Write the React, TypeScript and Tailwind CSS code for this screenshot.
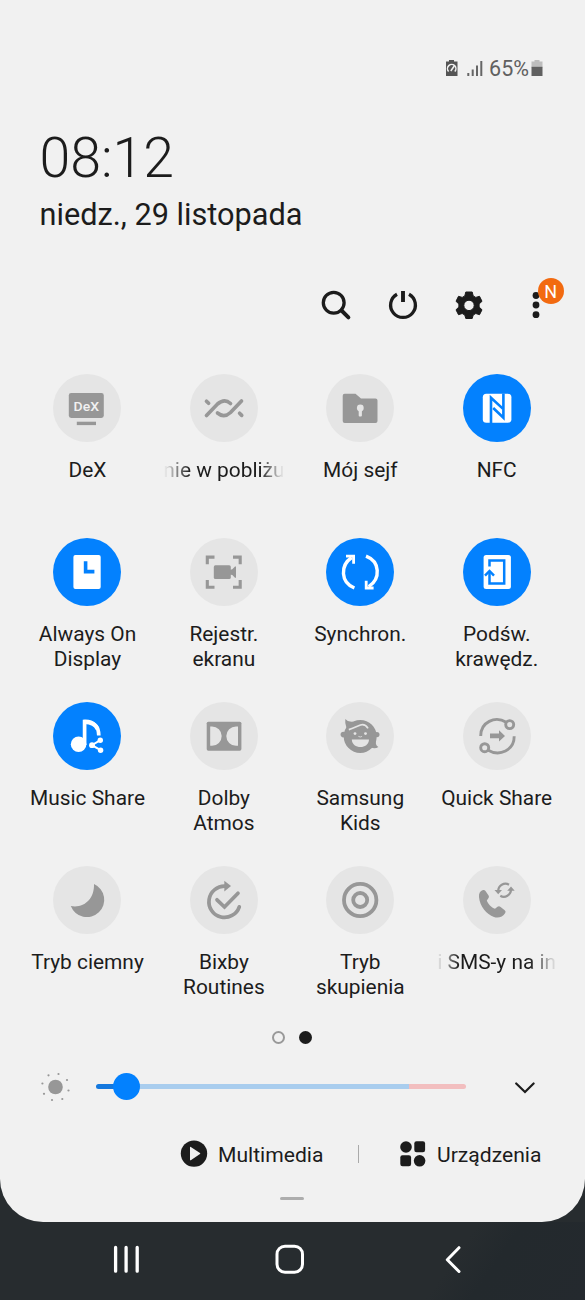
import type { ReactNode } from "react";

const G = "#979797";
const L = "#e5e5e5";
const B = "#0381fe";

type Tile = { label: string[]; on?: boolean; fade?: "left" | "right"; icon: ReactNode };

const tiles: Tile[] = [
  {
    label: ["DeX"],
    icon: (
      <>
        <rect x="15.8" y="19" width="35" height="25" rx="2.4" fill={G} />
        <rect x="23.8" y="47.7" width="19.2" height="3.4" fill={G} />
        <text x="33.3" y="36.7" fontSize="13.5" fontWeight="500" textAnchor="middle" textLength="25.5" lengthAdjust="spacingAndGlyphs" fill="#f1f1f1" fontFamily="Roboto">DeX</text>
      </>
    ),
  },
  {
    label: ["nie w pobliżu"],
    fade: "left",
    icon: (
      <g stroke={G} strokeWidth="3.7" strokeLinecap="round">
        <path d="M16.5 41.5 L27.5 30 Q34.5 24 40.5 29.5" />
        <path d="M51.5 27 L40.5 38.5 Q34 44.5 27.5 39" />
        <path d="M16.5 27.2 L18.6 29.3 M49.6 39.3 L51.7 41.4" />
      </g>
    ),
  },
  {
    label: ["Mój sejf"],
    icon: (
      <>
        <path d="M18.7 19.7 H29.5 L35 24.6 H49.5 A2 2 0 0 1 51.5 26.6 V47 A2 2 0 0 1 49.5 49 H18.7 A2 2 0 0 1 16.7 47 V21.7 A2 2 0 0 1 18.7 19.7Z" fill={G} />
        <circle cx="34.3" cy="34" r="3.4" fill={L} />
        <rect x="32.7" y="35" width="3.2" height="7.6" rx="1" fill={L} />
      </>
    ),
  },
  {
    label: ["NFC"],
    on: true,
    icon: (
      <>
        <rect x="19.8" y="19.8" width="28.6" height="29" rx="3.5" fill="white" />
        <path d="M28 49.2 V23.8 L39.8 34.6" stroke={B} strokeWidth="2.6" />
        <path d="M40.4 19.4 V43.8 L30.2 34" stroke={B} strokeWidth="2.6" />
      </>
    ),
  },
  {
    label: ["Always On", "Display"],
    on: true,
    icon: (
      <>
        <rect x="20.4" y="17" width="27.3" height="34" rx="2" fill="white" />
        <path d="M30.8 23.3 h3.6 v8.4 h7 v3.7 h-10.6z" fill={B} />
      </>
    ),
  },
  {
    label: ["Rejestr.", "ekranu"],
    icon: (
      <>
        <path d="M17.3 26.3 V19.1 H24.5 M43 19.1 H50.2 V26.3 M50.2 42 V49.2 H43 M24.5 49.2 H17.3 V42" stroke={G} strokeWidth="3.1" />
        <rect x="23.8" y="27.3" width="17" height="13.8" rx="1.6" fill={G} />
        <path d="M39.5 32 L42.3 31.2 L45 28.5 H46 V39.8 H45 L42.3 37.1 L39.5 36.4Z" fill={G} />
      </>
    ),
  },
  {
    label: ["Synchron."],
    on: true,
    icon: (
      <g stroke="white" strokeWidth="3.4">
        <path d="M28.4 50 C14.5 44.5 14 27.5 25.7 19.5" />
        <path d="M20 18.1 H27.6 V25.8" strokeWidth="2.8" />
        <path d="M40 18.2 C54 23.5 55 40.5 42.7 48.7" />
        <path d="M47.6 50 H40.2 V42.8" strokeWidth="2.8" />
      </g>
    ),
  },
  {
    label: ["Podśw.", "krawędz."],
    on: true,
    icon: (
      <>
        <rect x="20.6" y="17" width="27.3" height="34" rx="2.5" fill="white" />
        <g stroke={B} strokeWidth="2.5">
          <path d="M26.5 28.6 V22.6 H41.2 V45.5 H26.5 V34" />
          <path d="M22 37.6 L26.5 33 L31 37.6" />
        </g>
      </>
    ),
  },
  {
    label: ["Music Share"],
    on: true,
    icon: (
      <>
        <circle cx="25.6" cy="42.3" r="7.8" fill="white" />
        <path d="M31.6 43 V19.4 C40 19 45.8 24 45.8 33.4" stroke="white" strokeWidth="3.7" />
        <path d="M31.6 20 C38.5 20.5 43 22.5 44.6 27" stroke="white" strokeWidth="4.2" />
        <path d="M47.4 38.2 L38.9 43.2 L47.6 48.2" stroke="white" strokeWidth="2" />
        <circle cx="47.3" cy="38.2" r="2.7" fill="white" />
        <circle cx="39" cy="43.2" r="2.9" fill="white" />
        <circle cx="47.6" cy="48.2" r="2.7" fill="white" />
      </>
    ),
  },
  {
    label: ["Dolby", "Atmos"],
    icon: (
      <>
        <rect x="16.7" y="19.7" width="34.7" height="29" rx="1.6" fill={G} />
        <path d="M20.2 24.4 H22 A9.7 9.7 0 0 1 22 43.8 H20.2Z M48 24.4 H46 A9.7 9.7 0 0 0 46 43.8 H48Z" fill={L} />
      </>
    ),
  },
  {
    label: ["Samsung", "Kids"],
    icon: (
      <>
        <circle cx="34.2" cy="34.4" r="16.5" fill={G} />
        <circle cx="17.4" cy="32.6" r="2.8" fill={G} />
        <circle cx="50.9" cy="32.6" r="2.6" fill={G} />
        <path d="M19.3 17 Q21.5 20 26.5 19.6 L29 24 L20.5 26 Q18.7 21 19.3 17Z M50 38 Q49.2 43.5 52.4 45 Q49 47.2 45 45.5Z" fill={G} />
        <path d="M22.8 27.6 C27 26.5 30.5 24.5 34.5 23 Q39 21.6 42 26.4" stroke={L} strokeWidth="1.7" />
        <path d="M25.8 37.6 H43 C42.8 47.6 26 47.6 25.8 37.6Z" fill={L} />
        <circle cx="29" cy="31.6" r="1.4" fill={L} />
        <circle cx="39.5" cy="31.6" r="1.4" fill={L} />
        <path d="M32.4 34.4 Q34.3 35.6 36.1 34.4" stroke={L} strokeWidth="0.8" />
      </>
    ),
  },
  {
    label: ["Quick Share"],
    icon: (
      <>
        <g stroke={G} strokeWidth="2.9">
          <path d="M17.7 34 C17.7 20 32 13.5 43.3 20.2" />
          <circle cx="46.7" cy="22.6" r="4" />
          <path d="M51.2 34.3 C51.2 48.5 36.5 54.8 25.2 48.2" />
          <circle cx="21.7" cy="45.7" r="4" />
        </g>
        <path d="M27 31.6 H36 V28.2 L42 34 L36 39.6 V36.2 H27Z" fill={G} />
      </>
    ),
  },
  {
    label: ["Tryb ciemny"],
    icon: <path d="M41 18 A17.3 17.3 0 1 1 17.8 40 C31 42.5 41.5 33 41 18Z" fill={G} />,
  },
  {
    label: ["Bixby", "Routines"],
    icon: (
      <>
        <path d="M49.3 40.8 A15.6 15.6 0 1 1 35.5 20.2" stroke={G} strokeWidth="3.7" strokeLinecap="round" />
        <path d="M34.3 14.8 L41 20 L34.3 25.5Z" fill={G} />
        <path d="M27 33.8 L34.5 41 L48 27.2" stroke={G} strokeWidth="3.7" strokeLinecap="round" />
      </>
    ),
  },
  {
    label: ["Tryb", "skupienia"],
    icon: (
      <g stroke={G} strokeWidth="3.8">
        <circle cx="34.2" cy="34" r="16.2" />
        <circle cx="34.2" cy="34" r="7" />
      </g>
    ),
  },
  {
    label: ["i SMS-y na in"],
    fade: "right",
    icon: (
      <>
        <path d="M16 31 C15.7 27.8 17 25 20 24.1 Q21.6 23.7 22.5 25.1 L25.6 29.4 Q26.6 31 25.2 32.6 L23.8 34.5 C24.9 38 28.5 41.6 32 42.8 L34.5 40.8 Q36 39.8 37.6 41 L41.7 44.2 Q43.2 45.5 42.2 47 C40 51 35 52.4 31 51 C23.5 48.3 16.8 40.5 16 31Z" fill={G} />
        <g stroke={G} strokeWidth="2.2">
          <path d="M35.2 25.5 C35 19.4 41.3 16 46 18.7" />
          <path d="M48 23 C48.2 29.2 41.8 32.5 37.3 29.8" />
        </g>
        <path d="M31.5 24 H39 L35.2 28.2Z M44.2 24.8 H51.7 L48 20.6Z" fill={G} />
      </>
    ),
  },
];

function TileView({ tile }: { tile: Tile }) {
  const fade =
    tile.fade === "left"
      ? "[mask-image:linear-gradient(to_right,transparent,black_26px,black_96px,transparent)]"
      : tile.fade === "right"
        ? "[mask-image:linear-gradient(to_right,transparent,black_22px,black_92px,transparent)]"
        : "";
  return (
    <button className="flex h-[164.1px] flex-col items-center">
      <span className={`flex size-[68px] rounded-full ${tile.on ? "bg-[#0381fe]" : "bg-[#e5e5e5]"}`}>
        <svg width="68" height="68" viewBox="0 0 68 68" fill="none">{tile.icon}</svg>
      </span>
      <span className={`mt-[16.5px] flex w-[120px] flex-col items-center overflow-hidden text-[20.9px] leading-[25px] whitespace-nowrap ${fade}`}>
        {tile.label.map((line) => (
          <span key={line} className="block">{line}</span>
        ))}
      </span>
    </button>
  );
}

export default function App() {
  return (
    <div className="h-[1300px] w-[585px] overflow-hidden bg-[#272c2f] font-[Roboto,sans-serif] text-[#1c1c1c]">
      <main className="flex h-[1221.5px] flex-col rounded-b-[43px] bg-[#f1f1f1]">
        <div className="flex h-[96px] items-end justify-end pr-[41px] pb-[15px] text-[#606060]">
          <svg width="44" height="24" viewBox="0 0 44 24" fill="none">
            <path d="M5 4.5 H8 V3 H13 V4.5 H16.5 V19 H5Z" fill="#555" />
            <path d="M7.6 14.5 A4.2 4.2 0 1 1 13.8 14.5" stroke="#f1f1f1" strokeWidth="1.5" />
            <path d="M9.8 14 L13.2 9" stroke="#f1f1f1" strokeWidth="1.5" />
            <path d="M27.3 16V19 M31.7 12.5V19 M36 8.5V19 M40.3 4V19" stroke="#666" strokeWidth="2" />
          </svg>
          <span className="ml-[4px] text-[21.5px] leading-6">65%</span>
          <svg width="15" height="24" viewBox="0 0 15 24">
            <path d="M2.5 4.5 H5.5 V3 H10.5 V4.5 H13.5 V10.5 H2.5Z" fill="#bdbdbd" />
            <path d="M2.5 9.8 H13.5 V19 H2.5Z" fill="#606060" />
          </svg>
        </div>

        <header className="h-[168px] pl-[39.5px]">
          <div className="pt-[30px] text-[55.4px] leading-[66px] font-light">08:12</div>
          <div className="mt-[5px] text-[30.7px] leading-[36px]">niedz., 29 listopada</div>
        </header>

        <div className="flex h-[109.5px] gap-[26.7px] pt-[21px] pl-[316px]">
          <svg width="40" height="40" viewBox="0 0 40 40" fill="none" stroke="#1c1c1c">
            <circle cx="17.7" cy="17.8" r="10.4" strokeWidth="3.3" />
            <path d="M25.5 25.5 L32.4 32.4" strokeWidth="3.9" strokeLinecap="round" />
          </svg>
          <svg width="40" height="40" viewBox="0 0 40 40" fill="none" stroke="#1c1c1c">
            <path d="M14 9.2 A12.4 12.4 0 1 0 26 9.2" strokeWidth="3.3" />
            <path d="M20 6 V17" strokeWidth="3.9" />
          </svg>
          <svg width="40" height="40" viewBox="0 0 40 40">
            <path fillRule="evenodd" fill="#1c1c1c" stroke="#1c1c1c" strokeWidth="1" strokeLinejoin="round" d="M16.8 7 H23.2 L24.2 10.9 L26.8 12.4 L30.5 11.3 L33 16.3 L30.1 19 V22 L33 24.8 L30.5 29.7 L26.8 28.5 L24.2 30 L23.2 33.5 H16.8 L15.8 30 L13.2 28.5 L9.5 29.7 L7 24.8 L9.9 22 V19 L7 16.3 L9.5 11.3 L13.2 12.4 L15.8 10.9Z M20 15.2 A5.2 5.2 0 1 0 20 25.6 A5.2 5.2 0 1 0 20 15.2Z" />
          </svg>
          <div className="relative size-10">
            <svg width="40" height="40" viewBox="0 0 40 40" fill="#1c1c1c">
              <circle cx="20" cy="10.5" r="3.4" />
              <circle cx="20" cy="20" r="3.4" />
              <circle cx="20" cy="29.7" r="3.4" />
            </svg>
            <span className="absolute -top-[7.5px] left-[21.5px] flex size-[26px] items-center justify-center rounded-full bg-[#f26a10] pt-[2px] text-[18px] leading-none text-white">N</span>
          </div>
        </div>

        <section className="ml-[19.3px] grid h-[656.4px] w-[545.6px] shrink-0 grid-cols-4">
          {tiles.map((tile) => (
            <TileView key={tile.label.join(" ")} tile={tile} />
          ))}
        </section>

        <div className="flex h-[15px] items-center justify-center gap-[14px] pr-px">
          <span className="size-[13px] rounded-full border-[2.5px] border-[#999]" />
          <span className="size-[13px] rounded-full bg-[#1c1c1c]" />
        </div>

        <div className="mt-[26px] flex h-8 items-center pl-[40px]">
          <svg width="32" height="32" viewBox="0 0 32 32" fill="#979797">
            <circle cx="15.5" cy="16" r="7.3" />
            <circle cx="8.5" cy="4.3" r="1.1" />
            <circle cx="18.5" cy="3" r="1.1" />
            <circle cx="27" cy="9" r="1.1" />
            <circle cx="28.5" cy="19.5" r="1.1" />
            <circle cx="22.3" cy="28" r="1.1" />
            <circle cx="12" cy="29" r="1.1" />
            <circle cx="4" cy="22.8" r="1.1" />
            <circle cx="2.4" cy="12.5" r="1.1" />
          </svg>
          <div className="ml-[24px] flex h-[5px] w-[370px] items-center">
            <span className="h-[5px] w-[18px] rounded-l-full bg-[#1478de]" />
            <span className="z-10 -mx-px size-[27px] shrink-0 rounded-full bg-[#0381fe]" />
            <span className="h-[5px] w-[270px] bg-[#a9cdee]" />
            <span className="h-[5px] w-[57px] rounded-r-full bg-[#f2bebf]" />
          </div>
          <svg className="ml-[49px]" width="20" height="32" viewBox="0 0 20 32" fill="none" stroke="#1c1c1c" strokeWidth="2.2">
            <path d="M1.2 12.5 L10 21 L18.6 12.5" strokeLinecap="round" />
          </svg>
        </div>

        <div className="mt-[35.5px] flex h-8 items-center pl-[180px] text-[21.1px] leading-8 whitespace-nowrap">
          <svg width="28" height="28" viewBox="0 0 28 28">
            <circle cx="14" cy="13.6" r="13.2" fill="#1c1c1c" />
            <path d="M10 7.4 Q10 6.6 10.8 7 L20 13 Q20.6 13.6 20 14.1 L10.8 20.2 Q10 20.6 10 19.7Z" fill="#f1f1f1" />
          </svg>
          <span className="ml-[10px] w-[106px] pt-px">Multimedia</span>
          <span className="ml-[34px] h-[18px] w-px bg-[#aaa]" />
          <svg className="ml-[40px]" width="28" height="28" viewBox="0 0 28 28" fill="#1c1c1c">
            <circle cx="7" cy="7" r="5.8" />
            <rect x="15.3" y="1.3" width="10.8" height="11" rx="2.2" />
            <rect x="1.3" y="15.3" width="10.8" height="11" rx="2.2" />
            <circle cx="20.6" cy="20.8" r="5.8" />
          </svg>
          <span className="ml-[10px] pt-px">Urządzenia</span>
        </div>
        <span className="mt-[27px] ml-[280px] h-[3px] w-[24px] rounded-full bg-[#adadad]" />
      </main>

      <nav className="flex h-[78.5px] bg-[linear-gradient(125deg,#272c2f_75%,#23292d_82%,#24292e)] pt-[22.5px] pl-[110px]">
        <svg width="32" height="32" viewBox="0 0 32 32" stroke="white" strokeWidth="3.3" strokeLinecap="round">
          <path d="M5.6 3.5V27.2 M16.1 3.5V27.2 M27.2 3.5V27.2" />
        </svg>
        <svg className="ml-[132px]" width="32" height="32" viewBox="0 0 32 32" fill="none" stroke="white" strokeWidth="3">
          <rect x="3" y="2.2" width="25.5" height="26" rx="8" />
        </svg>
        <svg className="ml-[132px]" width="32" height="32" viewBox="0 0 32 32" fill="none" stroke="white" strokeWidth="3" strokeLinecap="round" strokeLinejoin="round">
          <path d="M21 3.7 L9.3 15.7 L21 27.5" />
        </svg>
      </nav>
    </div>
  );
}
